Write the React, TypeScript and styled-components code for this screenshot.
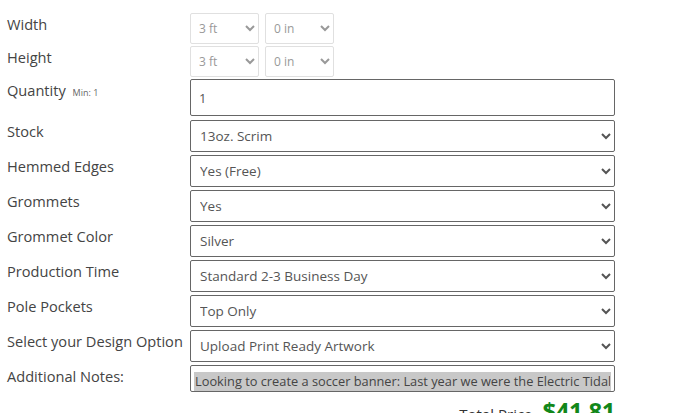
import { createGlobalStyle, styled } from "styled-components";

const GlobalStyle = createGlobalStyle`
  body {
    margin: 0;
    background: #fff;
    font-family: "Open Sans", "Liberation Sans", sans-serif;
  }
`;

const options = [
  { label: "Stock", value: "13oz. Scrim" },
  { label: "Hemmed Edges", value: "Yes (Free)" },
  { label: "Grommets", value: "Yes" },
  { label: "Grommet Color", value: "Silver" },
  { label: "Production Time", value: "Standard 2-3 Business Day" },
  { label: "Pole Pockets", value: "Top Only" },
  { label: "Select your Design Option", value: "Upload Print Ready Artwork" },
];

function App() {
  return (
    <>
      <GlobalStyle />
      <Form>
        <Row $top={13}>
          <Label>Width</Label>
          <SizePair>
            <SizeSelect defaultValue="3 ft">
              <option>3 ft</option>
            </SizeSelect>
            <SizeSelect defaultValue="0 in">
              <option>0 in</option>
            </SizeSelect>
          </SizePair>
        </Row>
        <Row $top={2}>
          <Label>Height</Label>
          <SizePair>
            <SizeSelect defaultValue="3 ft">
              <option>3 ft</option>
            </SizeSelect>
            <SizeSelect defaultValue="0 in">
              <option>0 in</option>
            </SizeSelect>
          </SizePair>
        </Row>
        <Row $top={2}>
          <Label>
            Quantity <Hint>Min: 1</Hint>
          </Label>
          <QtyInput defaultValue="1" />
        </Row>
        {options.map((o) => (
          <Row key={o.label} $top={4} $tight={o.label !== "Stock"}>
            <Label>{o.label}</Label>
            <Select defaultValue={o.value}>
              <option>{o.value}</option>
            </Select>
          </Row>
        ))}
        <Row $top={3}>
          <Label>Additional Notes:</Label>
          <NotesBox>
            <Notes defaultValue="Looking to create a soccer banner: Last year we were the Electric Tidal" />
          </NotesBox>
        </Row>
        <Total>
          <TotalLabel>Total Price</TotalLabel>
          <Price>$41.81</Price>
        </Total>
      </Form>
    </>
  );
}

const Form = styled.div`
  width: 615px;
  padding-left: 7px;
  box-sizing: border-box;
`;

const Row = styled.div<{ $top: number; $tight?: boolean }>`
  display: grid;
  grid-template-columns: 183px 425px;
  align-items: start;
  margin-top: ${(p) => (p.$tight ? 3 : p.$top)}px;
`;

const Label = styled.div`
  font-size: 14.6px;
  line-height: 20px;
  padding-top: 1px;
  color: #444;
  white-space: nowrap;
`;

const Hint = styled.span`
  font-size: 9px;
  color: #666;
  margin-left: 3px;
`;

const SizePair = styled.div`
  display: flex;
  gap: 6px;
`;

const SizeSelect = styled.select`
  width: 69px;
  height: 31px;
  border: 1px solid #e0e0e0;
  border-radius: 2px;
  background: #fff;
  color: #999;
  font-family: inherit;
  font-size: 12px;
  padding: 0 4px;
`;

const QtyInput = styled.input`
  width: 425px;
  height: 37px;
  box-sizing: border-box;
  border: 1px solid #666;
  border-radius: 2px;
  padding: 0 8px;
  color: #555;
  font-family: inherit;
  font-size: 13px;
`;

const Select = styled.select`
  width: 425px;
  height: 32px;
  box-sizing: border-box;
  border: 1px solid #666;
  border-radius: 2px;
  background: #fff;
  color: #555;
  font-family: inherit;
  font-size: 13.5px;
  padding: 0 5px;
`;

const NotesBox = styled.div`
  width: 425px;
  height: 27px;
  box-sizing: border-box;
  border: 1px solid #666;
  border-radius: 2px;
  padding: 3px;
`;

const Notes = styled.input`
  width: 100%;
  height: 100%;
  box-sizing: border-box;
  border: none;
  outline: none;
  background: #c8c8c8;
  color: #444;
  font-family: inherit;
  font-size: 12.8px;
  padding: 0 1px;
`;

const Total = styled.div`
  display: flex;
  justify-content: flex-end;
  align-items: baseline;
  gap: 10px;
  margin-top: 2px;
`;

const TotalLabel = styled.span`
  font-size: 15px;
  color: #333;
`;

const Price = styled.span`
  font-size: 24px;
  font-weight: 700;
  letter-spacing: -0.5px;
  color: #12871a;
`;

export default App;
